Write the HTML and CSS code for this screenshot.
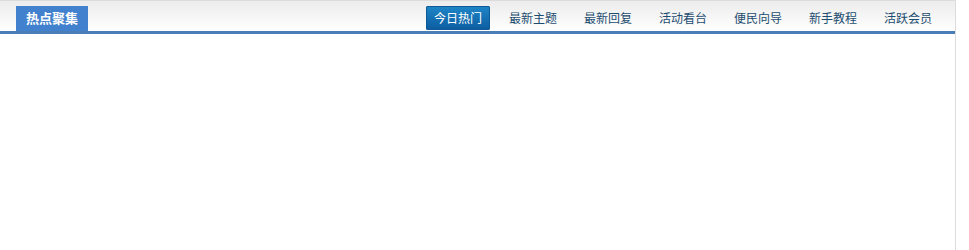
FILE: index.html
```html
<!DOCTYPE html>
<html lang="zh-CN">
<head>
<meta charset="utf-8">
<title>热点聚集</title>
<link rel="stylesheet" href="styles.css">
</head>
<body>
<div class="box">
  <div class="bar">
    <div class="title">热点聚集</div>
    <ul class="tabs">
      <li class="tab active">今日热门</li>
      <li class="tab">最新主题</li>
      <li class="tab">最新回复</li>
      <li class="tab">活动看台</li>
      <li class="tab">便民向导</li>
      <li class="tab">新手教程</li>
      <li class="tab">活跃会员</li>
    </ul>
  </div>
  <div class="body"></div>
</div>
</body>
</html>
```
FILE: styles.css
```css
html, body {
  margin: 0;
  padding: 0;
  background: #fff;
}
body {
  font-family: "Noto Sans CJK SC", "Liberation Sans", sans-serif;
}
.box {
  width: 956px;
  height: 250px;
  border-top: 1px solid #dcdcdc;
  border-right: 1px solid #dcdcdc;
  box-sizing: border-box;
}
.bar {
  height: 30px;
  display: flex;
  align-items: flex-end;
  justify-content: space-between;
  background: linear-gradient(#ececec, #ffffff);
  border-bottom: 3px solid #4a7db5;
}
.title {
  margin-left: 16px;
  width: 72px;
  height: 25px;
  line-height: 24px;
  background: #4281cd;
  color: #fff;
  font-weight: bold;
  font-size: 13px;
  text-align: center;
}
.tabs {
  list-style: none;
  margin: 0 15px 1px 0;
  padding: 0;
  display: flex;
  gap: 11px;
}
.tab {
  width: 64px;
  height: 24px;
  line-height: 23px;
  text-align: center;
  font-size: 12px;
  color: #1d4d70;
  border-radius: 2px;
}
.tab.active {
  color: #fff;
  background: linear-gradient(#1e86c8, #0c5c9f);
  box-shadow: inset 0 0 0 1px #0d5a96;
}
```
